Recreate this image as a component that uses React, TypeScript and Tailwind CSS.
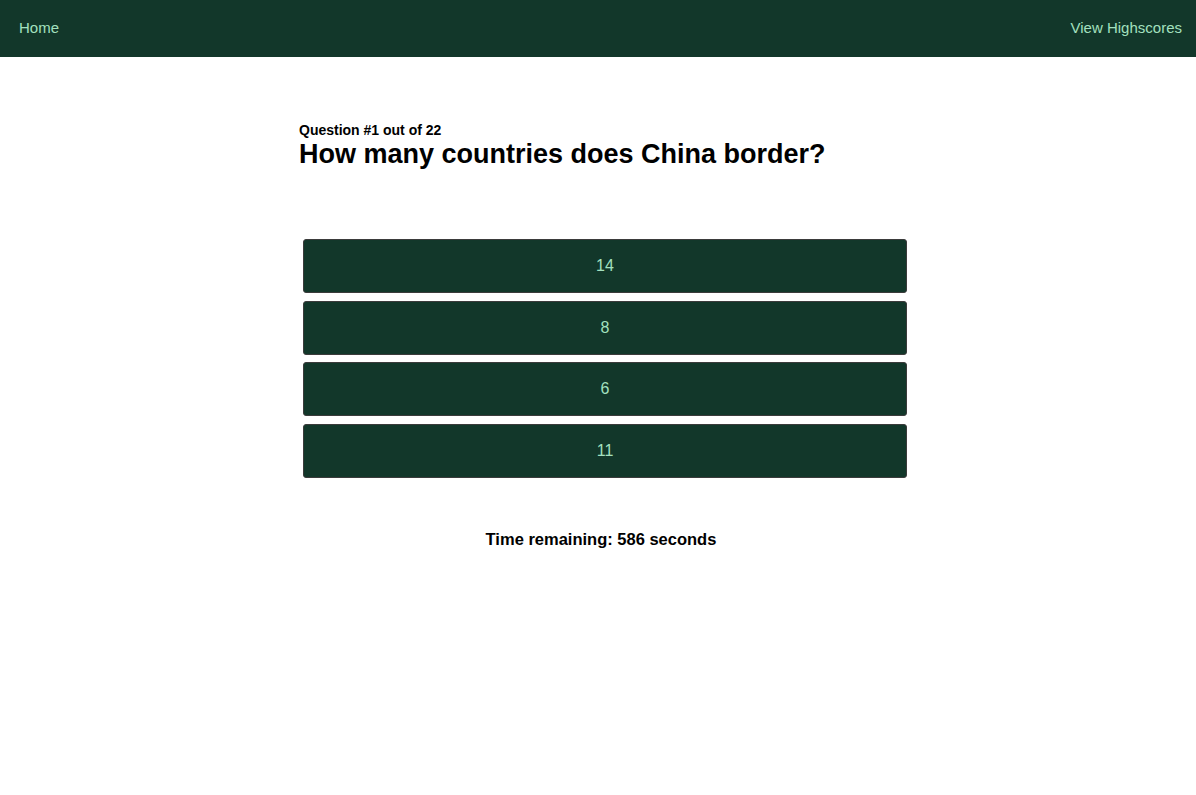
import React from 'react';

const answers = ['14', '8', '6', '11'];

export default function App() {
    return (
        <main className="min-h-screen bg-white font-['Liberation_Sans',Arial,sans-serif]">

            {/* Top bar */}
            <nav className="flex h-[57px] items-center justify-between bg-[#12372a] pl-[19px] pr-[14px] text-[15px] text-[#a3e0bf]">
                <a href="#">Home</a>
                <a href="#">View Highscores</a>
            </nav>

            {/* Quiz */}
            <section className="mx-auto w-[600px] pl-px pt-[66px]">
                <p className="text-[14px] font-bold leading-[15px] text-black">Question #1 out of 22</p>
                <h1 className="text-[27px] font-bold leading-[32px] text-black">How many countries does China border?</h1>

                <div className="mt-[69px] flex flex-col gap-[7.5px] pl-1">
                    {answers.map((a) => (
                        <button
                            key={a}
                            className="h-[54px] w-[604px] shrink-0 rounded-[3px] border border-[#3b3b3b] bg-[#12372a] text-[16px] text-[#a3e0bf]"
                        >
                            {a}
                        </button>
                    ))}
                </div>

                <p className="mt-[49px] pl-[5px] text-center text-[16.5px] font-bold text-black">Time remaining: 586 seconds</p>
            </section>

        </main>
    );
}
